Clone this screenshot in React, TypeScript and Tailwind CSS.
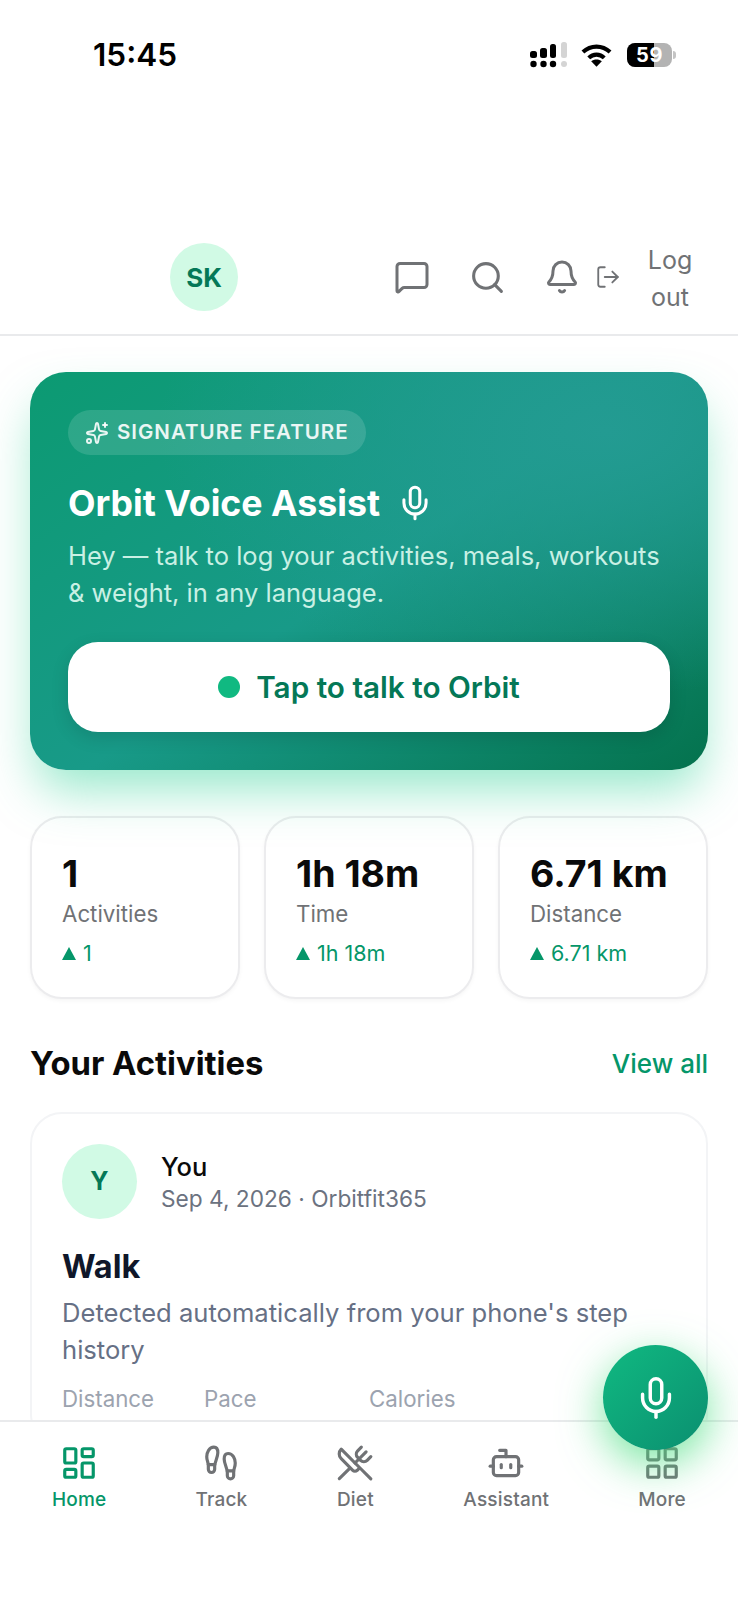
import { Bell, Bot, Footprints, LayoutDashboard, LayoutGrid, LogOut, MessageSquare, Mic, Search, Sparkles, UtensilsCrossed } from "lucide-react";

const stats = [
  { value: "1", label: "Activities", delta: "1" },
  { value: "1h 18m", label: "Time", delta: "1h 18m" },
  { value: "6.71 km", label: "Distance", delta: "6.71 km" },
];

const navItems = [
  { label: "Home", icon: LayoutDashboard, active: true },
  { label: "Track", icon: Footprints },
  { label: "Diet", icon: UtensilsCrossed },
  { label: "Assistant", icon: Bot },
  { label: "More", icon: LayoutGrid },
];

function StatusIcons() {
  return (
    <div className="flex items-center">
      {/* signal */}
      <svg width="37" height="26" viewBox="0 0 37 26">
        <g fill="#000">
          <rect x="0" y="9" width="7" height="7" rx="2.5" />
          <rect x="10" y="6" width="7" height="10" rx="2.5" />
          <rect x="20" y="2" width="6" height="14" rx="2.5" />
          <circle cx="3.5" cy="22" r="3.2" />
          <circle cx="13.5" cy="22" r="3.2" />
          <circle cx="23" cy="22" r="3.2" />
        </g>
        <rect x="31" y="0" width="6" height="16" rx="2.5" fill="#d4d4d4" />
        <circle cx="34" cy="22" r="3" fill="#d4d4d4" />
      </svg>
      {/* wifi */}
      <svg width="31" height="24" viewBox="0 0 32 24" fill="none" stroke="#000" strokeWidth="4.2" className="ml-[14px]">
        <path d="M2 9 C10 1.5 22 1.5 30 9" />
        <path d="M8 15 C12.5 10.5 19.5 10.5 24 15" />
        <path d="M16 24 L10.5 18.5 C13.5 16 18.5 16 21.5 18.5 Z" fill="#000" stroke="none" />
      </svg>
      {/* battery */}
      <div className="relative ml-[15px] flex h-[24px] w-[45px] items-center justify-center overflow-hidden rounded-[8px] bg-[#b3b3b3]">
        <div className="absolute inset-y-0 left-0 w-[27px] bg-black" />
        <span className="relative text-[20px] font-bold leading-none tracking-[0.5px] text-white">59</span>
      </div>
      <div className="ml-[1px] h-[8px] w-[3px] rounded-r-full bg-[#c4c4c4]" />
    </div>
  );
}

export default function App() {
  return (
    <div className="relative flex h-[1600px] w-[738px] flex-col overflow-hidden bg-white font-['Inter',sans-serif]">
      {/* Status bar */}
      <div className="flex h-[110px] shrink-0 items-center justify-between pl-[93px] pr-[62px]">
        <span className="text-[31.5px] font-semibold leading-none text-black">15:45</span>
        <StatusIcons />
      </div>

      {/* Header */}
      <header className="mt-[126px] flex h-[100px] shrink-0 items-center justify-between border-b-2 border-[#e9eaec] pb-[16px] pl-[170px] pr-[43px]">
        <div className="flex h-[68px] w-[68px] items-center justify-center rounded-full bg-[#d1fae5] text-[26px] font-bold text-[#047857]">
          SK
        </div>
        <div className="flex items-center text-[#707275]">
          <MessageSquare size={36} strokeWidth={2} />
          <Search size={37} strokeWidth={2} className="ml-[39px]" />
          <Bell size={36} strokeWidth={2} className="ml-[38px]" />
          <LogOut size={26} strokeWidth={1.7} className="ml-[15px]" />
          <span className="ml-[24px] mt-[4px] w-[50px] text-center text-[25px] leading-[37px]">Log out</span>
        </div>
      </header>

      <main className="min-h-0 flex-1 overflow-hidden px-[30px] pt-[36px]">
        {/* Hero */}
        <section className="relative z-10 h-[398px] rounded-[36px] bg-[radial-gradient(ellipse_at_85%_15%,#239b92_0%,transparent_55%),linear-gradient(145deg,#0c9a72_0%,#189a88_50%,#04724d_100%)] px-[38px] pt-[38px] shadow-[0_26px_48px_-6px_rgba(52,211,153,0.5)]">
          <div className="inline-flex h-[45px] items-center gap-[8px] rounded-full bg-white/[0.13] px-[17px] text-[20.5px] font-semibold tracking-[1px] text-white/90">
            <Sparkles size={24} strokeWidth={2} />
            SIGNATURE FEATURE
          </div>
          <div className="mt-[26px] flex items-center gap-[16px]">
            <h1 className="text-[35.7px] font-bold leading-[44px] text-white">Orbit Voice Assist</h1>
            <Mic size={38} strokeWidth={1.9} className="text-white" />
          </div>
          <p className="mt-[12px] text-[25.5px] leading-[37px] text-[#c9f0e4]">
            Hey — talk to log your activities, meals, workouts &amp; weight, in any language.
          </p>
          <button className="mt-[31px] flex h-[90px] w-[602px] items-center justify-center gap-[16px] rounded-[30px] bg-white text-[29.7px] font-semibold text-[#047857] shadow-[0_6px_18px_rgba(0,0,0,0.12)]">
            <span className="h-[22px] w-[22px] rounded-full bg-[#10b981]" />
            Tap to talk to Orbit
          </button>
        </section>

        {/* Stats */}
        <section className="mt-[46px] grid grid-cols-3 gap-[24px]">
          {stats.map((s) => (
            <div key={s.label} className="h-[183px] rounded-[32px] border-2 border-[#ececee] bg-white px-[30px] pt-[32px] shadow-[0_2px_4px_rgba(0,0,0,0.04)]">
              <div className="text-[37.5px] font-bold leading-[48px] text-[#0a0a0a]">{s.value}</div>
              <div className="mt-[1px] text-[22.3px] leading-[30px] text-[#707275]">{s.label}</div>
              <div className="mt-[10px] flex items-center gap-[7px] text-[21.5px] leading-[28px] text-[#059669]">
                <span className="h-0 w-0 border-x-[7px] border-b-[13px] border-x-transparent border-b-[#059669]" />
                {s.delta}
              </div>
            </div>
          ))}
        </section>

        {/* Activities */}
        <section className="mt-[42px] flex items-center justify-between">
          <h2 className="text-[32.8px] font-bold leading-[44px] text-[#0a0a0a]">Your Activities</h2>
          <a className="text-[26px] font-medium text-[#059669]">View all</a>
        </section>

        <article className="mt-[27px] rounded-[32px] border-2 border-[#f3f4f6] bg-white px-[30px] pb-[30px] pt-[30px]">
          <div className="flex items-center gap-[24px]">
            <div className="flex h-[75px] w-[75px] items-center justify-center rounded-full bg-[#d1fae5] text-[25px] font-bold text-[#047857]">
              Y
            </div>
            <div className="pt-[3px]">
              <div className="text-[25.5px] font-medium leading-[32px] text-[#0a0a0a]">You</div>
              <div className="text-[22.7px] leading-[32px] text-[#6b7280]">Sep 4, 2026 · Orbitfit365</div>
            </div>
          </div>
          <h3 className="mt-[26px] text-[32.5px] font-bold leading-[44px] text-[#0f172a]">Walk</h3>
          <p className="mt-[5px] text-[25.6px] leading-[37px] text-[#667085]">
            Detected automatically from your phone's step history
          </p>
          <div className="mt-[16px] flex text-[22.3px] leading-[30px] text-[#9ca3af]">
            <span className="w-[142px]">Distance</span>
            <span className="w-[165px]">Pace</span>
            <span>Calories</span>
          </div>
        </article>
      </main>

      {/* Bottom nav */}
      <nav className="relative z-10 flex h-[180px] shrink-0 items-start justify-between border-t-2 border-[#e9eaec] bg-white px-[52px] pt-[22px]">
        {navItems.map(({ label, icon: Icon, active }) => (
          <div key={label} className={`flex flex-col items-center gap-[4px] text-[19px] font-medium tracking-[0.2px] ${active ? "text-[#059669]" : "text-[#707275]"}`}>
            <Icon size={38} strokeWidth={2} />
            {label}
          </div>
        ))}
      </nav>

      {/* Voice button */}
      <button className="absolute left-[603px] top-[1345px] z-20 flex h-[105px] w-[105px] items-center justify-center rounded-full bg-[linear-gradient(135deg,#10b981,#0b8f70)] text-white shadow-[0_14px_44px_rgba(74,222,128,0.75)]">
        <Mic size={46} strokeWidth={1.8} />
      </button>
    </div>
  );
}
